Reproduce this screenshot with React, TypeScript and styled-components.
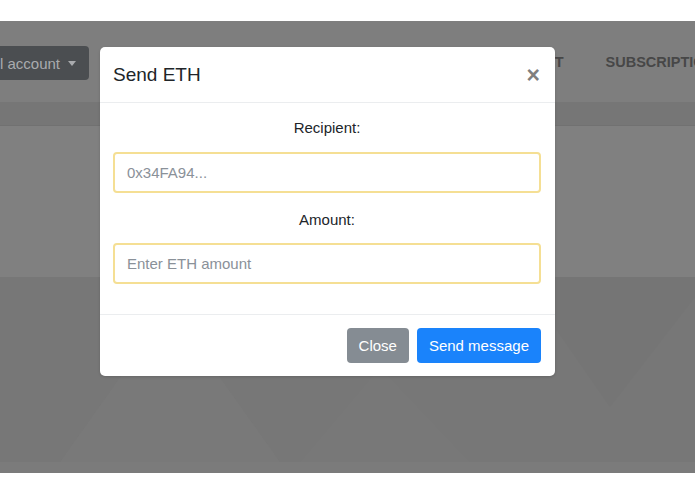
import React from "react"
import styled, { createGlobalStyle } from "styled-components"

const GlobalStyle = createGlobalStyle`
  html, body {
    margin: 0;
    padding: 0;
    background: #ffffff;
    font-family: "Liberation Sans", Arial, sans-serif;
  }
`

function App() {
  return (
    <>
      <GlobalStyle />
      <Shot>
        <Page>
          <Navbar>
            <AccountButton>
              l account
              <Caret />
            </AccountButton>
            <NavLinks>
              <NavLink>ACCOUNT</NavLink>
              <NavLink>SUBSCRIPTIONS</NavLink>
            </NavLinks>
          </Navbar>
          <SubBar />
          <Hero />
          <Lower>
            <Triangles viewBox="0 0 695 185" preserveAspectRatio="none">
              <polygon points="60,185 170,30 280,185" fill="#797979" />
              <polygon points="300,185 380,90 470,185" fill="#787878" />
              <polygon points="520,0 610,130 695,20 695,0" fill="#757575" />
            </Triangles>
          </Lower>
          <BottomBand />
        </Page>

        <Modal>
          <ModalHeader>
            <ModalTitle>Send ETH</ModalTitle>
            <CloseX>×</CloseX>
          </ModalHeader>
          <ModalBody>
            <FieldLabel>Recipient:</FieldLabel>
            <TextInput placeholder="0x34FA94..." />
            <FieldLabel $spaced>Amount:</FieldLabel>
            <TextInput placeholder="Enter ETH amount" />
          </ModalBody>
          <ModalFooter>
            <Button $variant="secondary">Close</Button>
            <Button $variant="primary">Send message</Button>
          </ModalFooter>
        </Modal>
      </Shot>
    </>
  )
}

const Shot = styled.div`
  position: relative;
  margin-top: 21px;
  height: 452px;
  overflow: hidden;
  white-space: nowrap;
`

const Page = styled.div`
  display: flex;
  flex-direction: column;
  height: 100%;
`

const Navbar = styled.div`
  display: flex;
  align-items: flex-start;
  height: 81px;
  padding-top: 25px;
  box-sizing: border-box;
  background: #7e7e7e;
`

const AccountButton = styled.div`
  display: flex;
  align-items: center;
  height: 34px;
  padding: 0 13px 0 0;
  background: #4b4e51;
  border-radius: 0 4px 4px 0;
  color: #a9abae;
  font-size: 15px;
`

const Caret = styled.span`
  margin-left: 8px;
  width: 0;
  height: 0;
  border-left: 4px solid transparent;
  border-right: 4px solid transparent;
  border-top: 5px solid #a9abae;
`

const NavLinks = styled.div`
  display: flex;
  gap: 42px;
  margin-left: 402px;
  padding-top: 8px;
  line-height: 17px;
`

const NavLink = styled.span`
  font-size: 14.5px;
  font-weight: 700;
  color: #474747;
`

const SubBar = styled.div`
  height: 23px;
  background: #767676;
  border-bottom: 1px solid #717171;
`

const Hero = styled.div`
  height: 151px;
  background: #808080;
`

const Lower = styled.div`
  flex: 1;
  background: #777777;
  overflow: hidden;
`

const Triangles = styled.svg`
  display: block;
  width: 100%;
  height: 100%;
`

const BottomBand = styled.div`
  height: 11px;
  background: #7b7b7b;
`

const Modal = styled.div`
  position: absolute;
  left: 100px;
  top: 26px;
  width: 455px;
  background: #ffffff;
  border-radius: 5px;
  box-shadow: 0 1px 3px rgba(0, 0, 0, 0.15);
  display: flex;
  flex-direction: column;
`

const ModalHeader = styled.div`
  display: flex;
  align-items: center;
  justify-content: space-between;
  height: 55px;
  padding: 0 15px 0 13px;
  border-bottom: 1px solid #ebedef;
`

const ModalTitle = styled.h5`
  margin: 0;
  font-size: 19px;
  font-weight: 400;
  color: #212529;
`

const CloseX = styled.span`
  font-size: 23px;
  font-weight: 700;
  line-height: 1;
  color: #7f7f7f;
  margin-top: 2px;
`

const ModalBody = styled.div`
  display: flex;
  flex-direction: column;
  padding: 14px 14px 30px 13px;
`

const FieldLabel = styled.label<{ $spaced?: boolean }>`
  display: block;
  text-align: center;
  font-size: 15px;
  line-height: 22px;
  color: #212529;
  margin-top: ${(p) => (p.$spaced ? "16px" : "0")};
  margin-bottom: ${(p) => (p.$spaced ? "12px" : "13px")};
`

const TextInput = styled.input`
  box-sizing: border-box;
  width: 100%;
  height: 41px;
  padding: 0 12px;
  border: 2px solid #f5df94;
  border-radius: 4px;
  font-family: "Liberation Sans", Arial, sans-serif;
  font-size: 15px;
  color: #495057;
  outline: none;

  &::placeholder {
    color: #8a9199;
  }
`

const ModalFooter = styled.div`
  display: flex;
  justify-content: flex-end;
  gap: 8px;
  padding: 13px 14px 13px 13px;
  border-top: 1px solid #ebedef;
`

const Button = styled.button<{ $variant: "primary" | "secondary" }>`
  height: 35px;
  padding: 0 12px;
  border: none;
  border-radius: 4px;
  font-family: "Liberation Sans", Arial, sans-serif;
  font-size: 15px;
  color: #ffffff;
  background: ${(p) => (p.$variant === "primary" ? "#1a83fb" : "#858c93")};
  cursor: pointer;
`

export default App
